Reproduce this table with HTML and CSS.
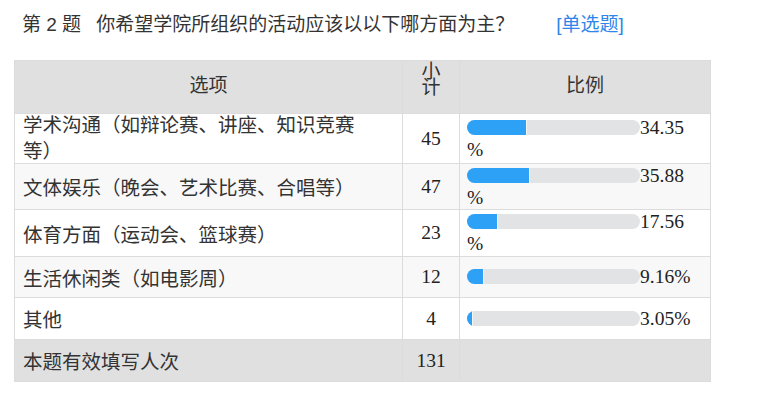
FILE: index.html
```html
<!DOCTYPE html>
<html lang="zh-CN">
<head>
<meta charset="utf-8">
<title>第2题</title>
<link rel="stylesheet" href="styles.css">
</head>
<body>
<div class="page">
  <div class="q-title">
    <span class="q-no">第 2 题</span><span class="q-text">你希望学院所组织的活动应该以以下哪方面为主？</span><span class="q-type">[单选题]</span>
  </div>
  <table class="result">
    <colgroup>
      <col class="c-opt">
      <col class="c-cnt">
      <col class="c-pct">
    </colgroup>
    <thead>
      <tr class="head-row">
        <th class="h-opt">选项</th>
        <th class="h-cnt">小计</th>
        <th class="h-pct">比例</th>
      </tr>
    </thead>
    <tbody>
      <tr class="row row-a">
        <td class="opt"><div class="opt-2line">学术沟通（如辩论赛、讲座、知识竞赛等）</div></td>
        <td class="cnt">45</td>
        <td class="pct"><div class="pct-wrap"><span class="bar"><span class="fill" style="width:34.35%"></span></span>34.35<wbr>%</div></td>
      </tr>
      <tr class="row row-b alt">
        <td class="opt">文体娱乐（晚会、艺术比赛、合唱等）</td>
        <td class="cnt">47</td>
        <td class="pct"><div class="pct-wrap"><span class="bar"><span class="fill" style="width:35.88%"></span></span>35.88<wbr>%</div></td>
      </tr>
      <tr class="row row-c">
        <td class="opt">体育方面（运动会、篮球赛）</td>
        <td class="cnt">23</td>
        <td class="pct"><div class="pct-wrap"><span class="bar"><span class="fill" style="width:17.56%"></span></span>17.56<wbr>%</div></td>
      </tr>
      <tr class="row row-d alt">
        <td class="opt">生活休闲类（如电影周）</td>
        <td class="cnt">12</td>
        <td class="pct"><div class="pct-wrap"><span class="bar"><span class="fill" style="width:9.16%"></span></span>9.16<wbr>%</div></td>
      </tr>
      <tr class="row row-e">
        <td class="opt">其他</td>
        <td class="cnt">4</td>
        <td class="pct"><div class="pct-wrap"><span class="bar"><span class="fill" style="width:3.05%"></span></span>3.05<wbr>%</div></td>
      </tr>
      <tr class="row row-total">
        <td class="opt">本题有效填写人次</td>
        <td class="cnt">131</td>
        <td class="pct"></td>
      </tr>
    </tbody>
  </table>
</div>
</body>
</html>
```

FILE: styles.css
```css
html, body {
  margin: 0;
  padding: 0;
  background: #ffffff;
}

.page {
  padding: 10px 0 0 14px;
  width: 696px;
  font-family: "Noto Sans CJK SC", "Liberation Sans", sans-serif;
  color: #333333;
}

.q-title {
  padding-left: 8px;
  height: 26px;
  line-height: 26px;
  font-size: 19px;
  white-space: nowrap;
  margin-bottom: 24px;
  color: #333333;
}

.q-no {
  font-family: "Liberation Sans", "Noto Sans CJK SC", sans-serif;
  margin-right: 15px;
}

.q-type {
  margin-left: 42px;
  color: #2f86ea;
  font-family: "Liberation Sans", "Noto Sans CJK SC", sans-serif;
}

.result {
  border-collapse: collapse;
  table-layout: fixed;
  width: 696px;
}

.c-opt { width: 388px; }
.c-cnt { width: 57px; }
.c-pct { width: 251px; }

.result th,
.result td {
  border: 1px solid #dcdcdc;
  padding: 0;
}

.head-row {
  background: #e0e0e0;
  height: 53px;
}

.result th {
  font-weight: normal;
  font-size: 19px;
  color: #333333;
  text-align: center;
  vertical-align: middle;
  line-height: 24px;
  padding-bottom: 6px;
}

.result th.h-cnt {
  vertical-align: top;
  padding: 1px 10px 0;
  line-height: 16px;
}

.row { background: #ffffff; }
.row.alt { background: #f8f8f8; }
.row-a { height: 50px; }
.row-b { height: 46px; }
.row-c { height: 47px; }
.row-d { height: 41px; }
.row-e { height: 42px; }
.row-total { height: 42px; background: #e0e0e0; }

.result td.opt {
  padding: 0 40px 0 8px;
  font-size: 19.5px;
  line-height: 25px;
  color: #333333;
  vertical-align: middle;
}

.opt-2line {
  line-height: 26px;
  margin: -4px 0 0;
}

.result td.cnt {
  padding: 0 10px;
  text-align: center;
  font-family: "Liberation Serif", serif;
  font-size: 19.5px;
  color: #222222;
  vertical-align: middle;
}

.result td.pct {
  padding: 0 0 0 7px;
  font-family: "Liberation Serif", serif;
  font-size: 19.5px;
  line-height: 22px;
  color: #222222;
  vertical-align: middle;
}

.pct-wrap {
  width: 228px;
}

.bar {
  display: inline-block;
  width: 173px;
  height: 15px;
  border-radius: 8px;
  background: #e2e3e5;
  overflow: hidden;
  vertical-align: -1px;
}

.fill {
  display: block;
  height: 100%;
  background: #2da1f5;
  box-shadow: 1px 0 0 #f4f4f4;
}
```
